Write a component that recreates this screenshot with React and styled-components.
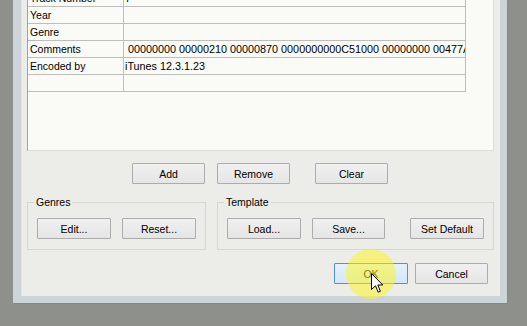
import React from "react";
import styled, { createGlobalStyle } from "styled-components";

const GlobalStyle = createGlobalStyle`
  html, body { margin: 0; padding: 0; background: #8e908c; }
  body { font-family: "Liberation Sans", Arial, sans-serif; font-size: 10.5px; color: #000; }
`;

const Stage = styled.div`
  position: relative;
  width: 527px;
  height: 326px;
  overflow: hidden;
  padding-left: 13px;
  box-sizing: border-box;
  background: #8e908c;
`;

const Window = styled.div`
  width: 494px;
  box-sizing: border-box;
  padding: 0 7px 7px 8px;
  background: #cdd4d9;
  box-shadow: 1px 1px 0 #868884;
`;

const Dialog = styled.div`
  height: 296px;
  box-sizing: border-box;
  padding: 0 6px;
  background: #ecece8;
  box-shadow: inset 1px 0 0 #e2e5e6;
  display: flex;
  flex-direction: column;
`;

const TableFrame = styled.div`
  height: 151px;
  box-sizing: border-box;
  border-left: 1px solid #a3a3a0;
  border-right: 1px solid #dcdcd8;
  border-bottom: 1px solid #dcdcd8;
  background: #fafaf6;
  overflow: hidden;
`;

const Grid = styled.div`
  width: 438px;
  margin-top: -10px;
  display: grid;
  grid-template-columns: 96px 342px;
`;

const Cell = styled.div`
  height: 17px;
  box-sizing: border-box;
  border-right: 1px solid #bdbdba;
  border-bottom: 1px solid #bdbdba;
  padding-left: ${(p) => (p.$value ? 1 : 2)}px;
  font-size: ${(p) => (p.$value ? 10.8 : 10.5)}px;
  line-height: 16px;
  white-space: nowrap;
  overflow: hidden;
`;

const ButtonRow = styled.div`
  display: flex;
  margin: 12px 0 0 105px;
  gap: 12px;
`;

const Button = styled.button`
  width: ${(p) => p.$w || 73}px;
  margin-left: ${(p) => p.$ml || 0}px;
  height: 21px;
  padding: 0;
  box-sizing: border-box;
  border: 1px solid ${(p) => (p.$default ? "#4f93d4" : "#acacac")};
  border-radius: 1px;
  background: ${(p) =>
    p.$default
      ? "linear-gradient(#e6f1fb, #d5e7f8)"
      : "linear-gradient(#f0f0f0, #e5e5e5)"};
  font-family: inherit;
  font-size: 10.5px;
  color: #000;
  flex: none;
`;

const Groups = styled.div`
  display: flex;
  gap: 11px;
  margin-top: 18px;
`;

const GroupBox = styled.div`
  width: ${(p) => p.$w}px;
  height: 48px;
  box-sizing: border-box;
  border: 1px solid #d6d6d2;
  padding: 0 0 0 9px;
`;

const Legend = styled.div`
  width: fit-content;
  height: 14px;
  line-height: 14px;
  margin: -8px 0 0 -3px;
  padding: 0 2px;
  background: #ecece8;
`;

const GroupButtons = styled.div`
  display: flex;
  gap: 11px;
  margin-top: 9px;
`;

const Footer = styled.div`
  display: flex;
  justify-content: flex-end;
  gap: 7px;
  margin: 13px 6px 0 0;
`;

const Highlight = styled.div`
  position: absolute;
  left: 346px;
  top: 249px;
  width: 50px;
  height: 50px;
  border-radius: 50%;
  background: rgba(255, 245, 20, 0.5);
  filter: blur(0.6px);
  pointer-events: none;
`;

const Cursor = styled.svg`
  position: absolute;
  left: 371px;
  top: 273px;
  pointer-events: none;
`;

const rows = [
  ["Track Number", "7"],
  ["Year", ""],
  ["Genre", ""],
  ["Comments", "\u00a000000000 00000210 00000870 0000000000C51000 00000000 00477A9C 00000000"],
  ["Encoded by", "iTunes 12.3.1.23"],
  ["", ""],
];

export default function App() {
  return (
    <>
      <GlobalStyle />
      <Stage>
        <Window>
          <Dialog>
            <TableFrame>
              <Grid>
                {rows.map(([k, v], i) => (
                  <React.Fragment key={i}>
                    <Cell>{k}</Cell>
                    <Cell $value>{v}</Cell>
                  </React.Fragment>
                ))}
              </Grid>
            </TableFrame>
            <ButtonRow>
              <Button>Add</Button>
              <Button>Remove</Button>
              <Button $ml={13}>Clear</Button>
            </ButtonRow>
            <Groups>
              <GroupBox $w={179}>
                <Legend>Genres</Legend>
                <GroupButtons>
                  <Button $w={74}>Edit...</Button>
                  <Button $w={74}>Reset...</Button>
                </GroupButtons>
              </GroupBox>
              <GroupBox $w={277}>
                <Legend>Template</Legend>
                <GroupButtons>
                  <Button $w={74}>Load...</Button>
                  <Button $w={73}>Save...</Button>
                  <Button $w={74} $ml={14}>Set Default</Button>
                </GroupButtons>
              </GroupBox>
            </Groups>
            <Footer>
              <Button $w={74} $default>OK</Button>
              <Button $w={73}>Cancel</Button>
            </Footer>
          </Dialog>
        </Window>
        <Highlight />
        <Cursor width="13" height="21" viewBox="0 0 13 21">
          <path
            d="M0.5 0.5 L0.5 16.5 L4.5 12.8 L7.2 19.2 L9.4 18.3 L6.8 12 L11.8 12 Z"
            fill="#fff"
            stroke="#000"
            strokeWidth="1"
            strokeLinejoin="miter"
          />
        </Cursor>
      </Stage>
    </>
  );
}
